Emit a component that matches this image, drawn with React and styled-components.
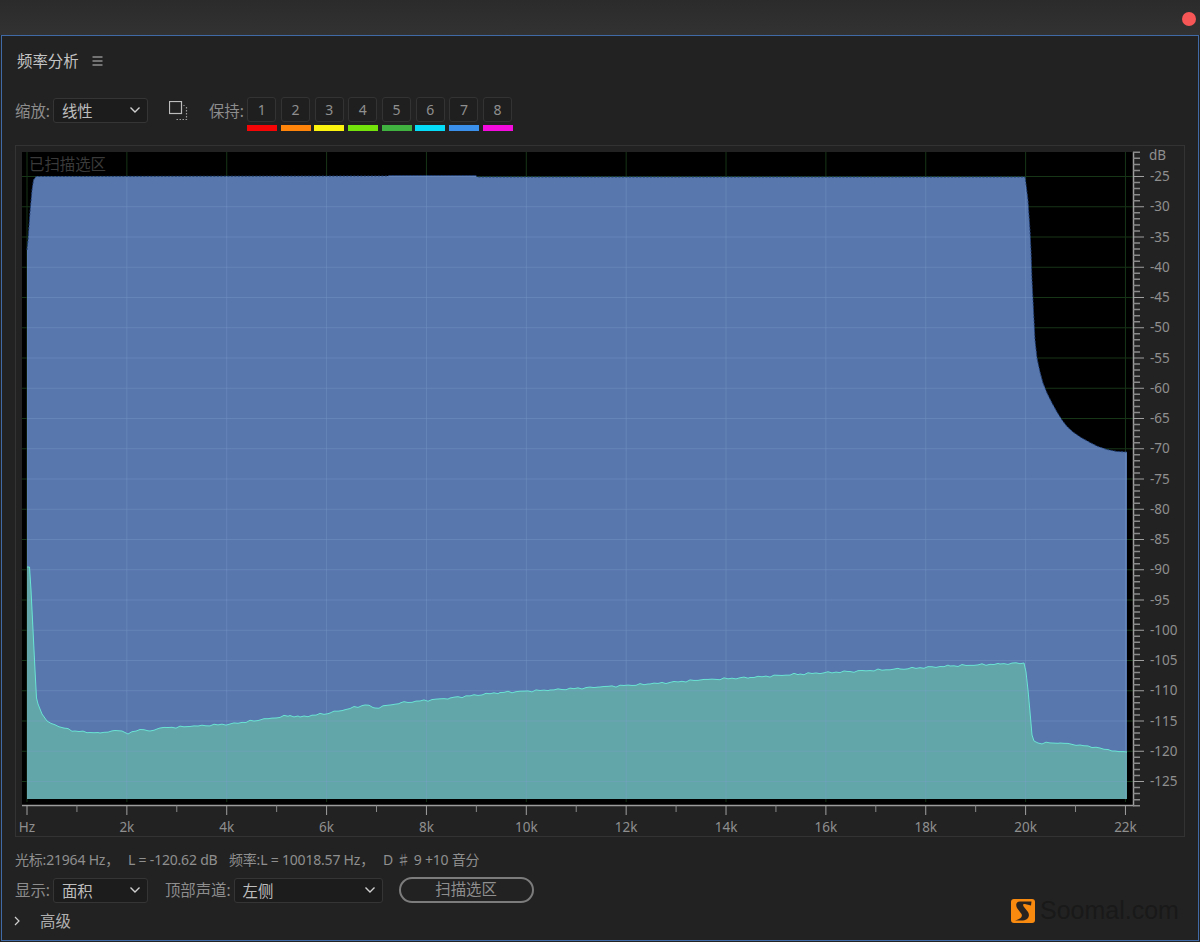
import React from "react";
import styled, { createGlobalStyle } from "styled-components";

const FONT = `"Noto Sans", "Noto Sans CJK SC", sans-serif`;

const Global = createGlobalStyle`
  html, body { margin: 0; padding: 0; background: #232323; }
  body { font-family: ${FONT}; }
`;

const Page = styled.div`
  width: 1200px;
  height: 942px;
  position: relative;
  overflow: hidden;
  display: flex;
  flex-direction: column;
  background: #232323;
`;

const TitleBar = styled.div`
  height: 35px;
  flex: none;
  display: flex;
  align-items: center;
  justify-content: flex-end;
  padding: 3px 4px 0 0;
  box-sizing: border-box;
  background: linear-gradient(#2b2b2b, #323232);
`;

const CloseDot = styled.span`
  width: 14px;
  height: 14px;
  border-radius: 50%;
  background: #f65656;
`;

const Panel = styled.section`
  width: 1198px;
  height: 906px;
  margin-left: 1px;
  box-sizing: border-box;
  border: 1px solid #3f6aa5;
  background: #222222;
  padding: 0 13px;
  display: flex;
  flex-direction: column;
`;

const Header = styled.header`
  height: 50px;
  flex: none;
  display: flex;
  align-items: center;
  gap: 13px;
  padding-left: 2px;
`;

const Title = styled.h1`
  margin: 2px 0 0;
  font-size: 15.4px;
  line-height: 20px;
  font-weight: 400;
  color: #c4c4c4;
`;

const Toolbar = styled.div`
  height: 34px;
  margin-top: 11px;
  flex: none;
  display: flex;
  align-items: flex-start;
`;

const Label = styled.span`
  font-size: 15.4px;
  line-height: 29px;
  height: 26px;
  color: #8d8d8d;
  white-space: nowrap;
  margin-left: ${(p) => p.$ml || 0}px;
  margin-right: 3px;
`;

const Select = styled.div`
  width: ${(p) => p.$w}px;
  height: 25px;
  margin-top: ${(p) => p.$mt || 0}px;
  box-sizing: border-box;
  border: 1px solid #353535;
  border-radius: 3px;
  background: #1c1c1c;
  padding: 0 6px 1px 8px;
  display: flex;
  align-items: center;
  justify-content: space-between;
  font-size: 15.4px;
  color: #bdbdbd;
`;

const IconSlot = styled.span`
  display: flex;
  margin: 4px 0 0 21px;
`;

const HoldRow = styled.div`
  display: flex;
  gap: 3.7px;
`;

const HoldCell = styled.div`
  width: 30px;
  display: flex;
  flex-direction: column;
  gap: 3px;
`;

const HoldKey = styled.div`
  height: 25px;
  margin: 0 0.5px;
  box-sizing: border-box;
  border: 1px solid #333;
  border-radius: 3px;
  background: #1f1f1f;
  font-size: 14px;
  line-height: 24px;
  text-align: center;
  color: #8f8f8f;
`;

const HoldBar = styled.div`
  height: 6px;
  background: ${(p) => p.$c};
`;

const ChartFrame = styled.div`
  height: 692px;
  margin-top: 14px;
  flex: none;
  box-sizing: border-box;
  border: 1px solid #333;
  width: 1170px;
  svg { display: block; }
`;

const Readout = styled.div`
  height: 20px;
  margin-top: 13px;
  flex: none;
  display: flex;
  font-size: 14px;
  line-height: 20px;
  letter-spacing: -0.2px;
  color: #8f8f8f;
  white-space: nowrap;
`;

const ReadoutPart = styled.span`
  width: ${(p) => p.$w}px;
  flex: none;
`;

const Controls = styled.div`
  height: 26px;
  margin-top: 7px;
  flex: none;
  display: flex;
  align-items: flex-start;
`;

const ControlLabel = styled(Label)`
  line-height: 28px;
`;

const ScanButton = styled.button`
  width: 135px;
  height: 26px;
  margin-left: 16px;
  box-sizing: border-box;
  border: 2px solid #7c7c7c;
  border-radius: 13px;
  background: transparent;
  font: 400 15.4px/20px ${FONT};
  color: #8f8f8f;
  padding: 0;
`;

const Advanced = styled.div`
  height: 20px;
  margin-top: 8px;
  flex: none;
  display: flex;
  align-items: center;
  gap: 20px;
  margin-left: -1px;
  font-size: 15.4px;
  line-height: 20px;
  color: #b0b0b0;
`;

const AdvancedText = styled.span`
  padding-top: 2px;
`;

const Watermark = styled.div`
  position: absolute;
  left: 1011px;
  top: 898px;
  display: flex;
  align-items: center;
  gap: 5px;
`;

const WatermarkText = styled.span`
  font: 400 25px/25px "Liberation Sans", sans-serif;
  color: #191919;
`;

const Chevron = () => (
  <svg width="12" height="8" viewBox="0 0 12 8" fill="none" stroke="#d0d0d0" strokeWidth="1.4">
    <path d="M1.5 1.5 L6 6 L10.5 1.5" />
  </svg>
);

const MenuIcon = () => (
  <svg width="11" height="10" viewBox="0 0 11 10" stroke="#c4c4c4" strokeWidth="1">
    <path d="M0.5 1 H10.5 M0.5 5 H10.5 M0.5 9 H10.5" />
  </svg>
);

const CopyIcon = () => (
  <svg width="19" height="20" viewBox="0 0 19 20" fill="none">
    <rect x="0.5" y="0.5" width="12" height="12" stroke="#bdbdbd" strokeWidth="1.2" />
    <path d="M15 4 V5 M17.5 6 V18.5 H6" stroke="#9a9a9a" strokeWidth="1.2" strokeDasharray="1.5 1.5" />
  </svg>
);

const AdvancedChevron = () => (
  <svg width="6" height="10" viewBox="0 0 6 10" fill="none" stroke="#d0d0d0" strokeWidth="1.2">
    <path d="M1 1 L5 5 L1 9" />
  </svg>
);

const LogoMark = () => (
  <svg width="24" height="24" viewBox="0 0 24 24">
    <rect width="24" height="24" rx="3" fill="#f98a10" />
    <path
      d="M20.5 2.5 H9 C5 2.5 4.5 6 6 9 L10.5 15 C12 18 9 20 4 21.5 H12 C18 21 19 16 17 13 L13 8 C11.5 6 12 4.5 14 5 L20 6.5 Z"
      fill="#2a2420"
    />
  </svg>
);

const HOLD_COLORS = ["#f50505", "#ff8409", "#fcf40e", "#74e30b", "#3fb23f", "#05dcf7", "#3a90ea", "#f50bdd"];

/* chart geometry, in page pixels (the svg viewBox starts at the frame's corner) */
const yOf = (db) => 176.5 + (-25 - db) * 6.05;
const xOf = (k) => 27 + k * 49.93;
const PLOT = { left: 27, right: 1127, bottom: 799 };

const BLUE = [
  [27, 799], [27, 250], [28, 240], [30, 212], [32, 190], [33.5, 180], [36, 176.5],
  [388, 176], [389, 175.5], [476, 175.5], [477, 177], [1025, 177],
  [1026.5, 188], [1028, 200], [1030, 230], [1031, 250], [1032, 280], [1033, 300], [1034, 320],
  [1035, 340], [1037, 358], [1040, 372], [1043, 383], [1047, 393], [1052, 403], [1057, 412],
  [1062, 420], [1067, 426.5], [1073, 432], [1081, 437.5], [1090, 442.5], [1098, 446.5], [1107, 449.5],
  [1117, 451.5], [1127, 452], [1127, 799],
];

const TEAL_KEYS = [
  [27, 567], [29.5, 567], [31, 590], [33, 630], [35, 670], [36.5, 698], [38, 704], [42, 714], [47, 721],
  [60, 727], [75, 731], [90, 732.5], [100, 733], [115, 730.5], [122, 731], [128, 734], [140, 729.5],
  [150, 731], [160, 728], [190, 726.5], [230, 724], [260, 720], [290, 715.5], [300, 717], [330, 713],
  [365, 705], [375, 708], [400, 703], [450, 698], [500, 692.5], [550, 690], [600, 687], [650, 684],
  [700, 680], [750, 677.5], [800, 674], [850, 671.5], [900, 669], [950, 666], [1000, 664], [1024, 663],
  [1026, 672], [1028, 690], [1030, 712], [1032, 735], [1034, 741], [1038, 743], [1060, 743], [1080, 745],
  [1100, 748], [1115, 751], [1127, 752],
];

/* a small repeatable ripple between the key points of the flat part of the curve */
const tealTrace = () => {
  const out = [];
  TEAL_KEYS.forEach(([x, y], i) => {
    out.push([x, y]);
    const next = TEAL_KEYS[i + 1];
    if (next && next[0] - x > 8) {
      for (let px = x + 4; px < next[0]; px += 4) {
        const t = (px - x) / (next[0] - x);
        const ripple = Math.sin(px * 0.9) * 0.6 + Math.sin(px * 0.37) * 0.5;
        out.push([px, y + (next[1] - y) * t + ripple]);
      }
    }
  });
  return out;
};

const points = (list) => list.map(([x, y]) => `${x},${y}`).join(" ");

const Chart = () => {
  const teal = tealTrace();
  const closedTeal = [...teal, [PLOT.right, PLOT.bottom], [PLOT.left, PLOT.bottom]];
  const blueTop = BLUE.slice(1, -1);
  const dbs = [];
  for (let d = -25; d >= -125; d -= 5) dbs.push(d);
  const khz = [];
  for (let k = 0; k <= 22; k += 2) khz.push(k);
  const minor = [];
  for (let d = -21; d >= -129; d -= 1) if (d % 5 !== 0) minor.push(d);
  const xMinor = [];
  for (let k = 1; k <= 21; k += 2) xMinor.push(k);

  const gridH = dbs.map((d) => `M22 ${yOf(d)} H1133`).join(" ");
  const gridV = khz.map((k) => `M${xOf(k)} 152 V802`).join(" ");
  const labelStyle = { fontFamily: FONT, fontSize: 13.5, fill: "#8f8f8f" };

  return (
    <svg width="1168" height="690" viewBox="16 146 1168 690">
      <defs>
        <clipPath id="blue-area">
          <polygon points={points(BLUE)} />
        </clipPath>
      </defs>
      <rect x="22" y="152" width="1111" height="653" fill="#000" />
      <path d={`${gridH} ${gridV}`} stroke="#173517" strokeWidth="1" fill="none" />
      <text x="29" y="170" style={{ fontFamily: FONT, fontSize: 15.4, fill: "#3a3a3a" }}>已扫描选区</text>

      <polygon points={points(BLUE)} fill="#5877ad" />
      <polygon points={points(closedTeal)} fill="#62a6aa" />
      <g clipPath="url(#blue-area)">
        <path d={`${gridH} ${gridV}`} stroke="#7f9fcb" strokeOpacity="0.35" strokeWidth="1" fill="none" />
      </g>
      <polyline points={points(blueTop)} fill="none" stroke="#1f3d75" strokeWidth="1" strokeDasharray="2 1.5" />
      <polyline points={points(teal)} fill="none" stroke="#6ae4d3" strokeWidth="1" />

      <path d="M22 805.5 H1133.5 V152" fill="none" stroke="#9c9c9c" strokeWidth="1.5" />
      <path d={minor.map((d) => `M1133 ${yOf(d)} H1140`).join(" ")} stroke="#8a8a8a" strokeWidth="1.5" />
      <path d={dbs.map((d) => `M1133 ${yOf(d)} H1144`).join(" ")} stroke="#a0a0a0" strokeWidth="1" />
      <path d={khz.map((k) => `M${xOf(k)} 805 V815`).join(" ")} stroke="#a0a0a0" strokeWidth="1" />
      <path d={xMinor.map((k) => `M${xOf(k)} 805 V812`).join(" ")} stroke="#8a8a8a" strokeWidth="1" />

      <text x="1149" y="160" style={labelStyle}>dB</text>
      {dbs.map((d) => (
        <text key={d} x="1150" y={yOf(d) + 4.5} style={labelStyle}>{d}</text>
      ))}
      {khz.map((k) => (
        <text key={k} x={xOf(k)} y="832" textAnchor="middle" style={labelStyle}>
          {k === 0 ? "Hz" : `${k}k`}
        </text>
      ))}
    </svg>
  );
};

export default function App() {
  return (
    <Page>
      <Global />
      <TitleBar>
        <CloseDot />
      </TitleBar>
      <Panel>
        <Header>
          <Title>频率分析</Title>
          <MenuIcon />
        </Header>
        <Toolbar>
          <Label>缩放:</Label>
          <Select $w={95} $mt={1}>
            线性
            <Chevron />
          </Select>
          <IconSlot>
            <CopyIcon />
          </IconSlot>
          <Label $ml={21}>保持:</Label>
          <HoldRow>
            {HOLD_COLORS.map((c, i) => (
              <HoldCell key={c}>
                <HoldKey>{i + 1}</HoldKey>
                <HoldBar $c={c} />
              </HoldCell>
            ))}
          </HoldRow>
        </Toolbar>
        <ChartFrame>
          <Chart />
        </ChartFrame>
        <Readout>
          <ReadoutPart $w={113}>光标:21964 Hz，</ReadoutPart>
          <ReadoutPart $w={101}>L = -120.62 dB</ReadoutPart>
          <ReadoutPart $w={154}>频率:L = 10018.57 Hz，</ReadoutPart>
          <ReadoutPart $w={100}>D ♯ 9 +10 音分</ReadoutPart>
        </Readout>
        <Controls>
          <ControlLabel>显示:</ControlLabel>
          <Select $w={95} $mt={1}>
            面积
            <Chevron />
          </Select>
          <ControlLabel $ml={17}>顶部声道:</ControlLabel>
          <Select $w={149} $mt={1}>
            左侧
            <Chevron />
          </Select>
          <ScanButton>扫描选区</ScanButton>
        </Controls>
        <Advanced>
          <AdvancedChevron />
          <AdvancedText>高级</AdvancedText>
        </Advanced>
      </Panel>
      <Watermark>
        <LogoMark />
        <WatermarkText>Soomal.com</WatermarkText>
      </Watermark>
    </Page>
  );
}
